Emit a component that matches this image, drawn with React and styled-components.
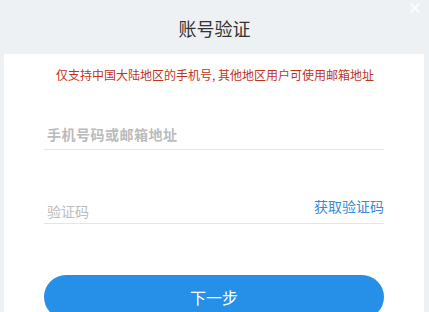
import React from 'react';
import styled, { createGlobalStyle } from 'styled-components';

const GlobalStyle = createGlobalStyle`
  html, body {
    margin: 0;
    padding: 0;
    background: #eef1f4;
    font-family: "Noto Sans CJK SC", "Liberation Sans", sans-serif;
  }
`;

const Dialog = styled.div`
  position: relative;
  width: 429px;
  height: 312px;
  overflow: hidden;
  background: #eef1f4;
  display: flex;
  flex-direction: column;
`;

const Header = styled.div`
  flex-shrink: 0;
  height: 54px;
  display: flex;
  align-items: center;
  justify-content: center;
  font-size: 18px;
  color: #333;
  padding-top: 2px;
  box-sizing: border-box;
`;

const Close = styled.button`
  position: absolute;
  top: 2px;
  right: 8px;
  width: 12px;
  height: 12px;
  padding: 0;
  border: 0;
  background: none;
  cursor: pointer;
`;

const Body = styled.div`
  flex-shrink: 0;
  margin: 0 5px 0 4px;
  background: #fff;
  padding: 8px 40px 20px;
  display: flex;
  flex-direction: column;
`;

const Notice = styled.div`
  text-align: center;
  font-size: 12px;
  line-height: 26px;
  color: #c0341d;
  padding: 0 0 0 2px;
`;

const Field = styled.div`
  display: flex;
  align-items: flex-end;
  justify-content: space-between;
  height: 32px;
  margin-top: ${p => p.$top}px;
  border-bottom: 1px solid #e3e5e8;
  box-sizing: border-box;
`;

const Input = styled.input`
  flex: 1;
  border: 0;
  outline: none;
  padding: 0 0 ${p => (p.$bold ? 5 : 2)}px 3px;
  font-family: "Noto Sans CJK SC", sans-serif;
  font-size: 14px;
  font-weight: ${p => (p.$bold ? 700 : 400)};
  letter-spacing: ${p => (p.$bold ? '0.5px' : '0')};
  color: #333;
  background: transparent;
  &::placeholder {
    color: #bbbbbb;
  }
`;

const CodeLink = styled.a`
  font-size: 14px;
  color: #3a8ad8;
  padding-bottom: 7px;
  cursor: pointer;
`;

const Submit = styled.button`
  margin-top: 51px;
  height: 44px;
  border: 0;
  border-radius: 22px;
  background: #2690e8;
  color: #fff;
  font-family: "Noto Sans CJK SC", sans-serif;
  font-size: 16px;
  cursor: pointer;
`;

export default function App() {
  return (
    <>
      <GlobalStyle />
      <Dialog>
        <Header>账号验证</Header>
        <Close aria-label="close">
          <svg width="12" height="12" viewBox="0 0 12 12">
            <path d="M2 2L10 10M10 2L2 10" stroke="#fff" strokeWidth="1.6" strokeLinecap="round" />
          </svg>
        </Close>
        <Body>
          <Notice>仅支持中国大陆地区的手机号, 其他地区用户可使用邮箱地址</Notice>
          <Field $top={30}>
            <Input $bold placeholder="手机号码或邮箱地址" />
          </Field>
          <Field $top={42}>
            <Input placeholder="验证码" />
            <CodeLink>获取验证码</CodeLink>
          </Field>
          <Submit>下一步</Submit>
        </Body>
      </Dialog>
    </>
  );
}
